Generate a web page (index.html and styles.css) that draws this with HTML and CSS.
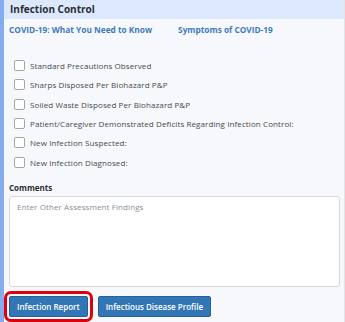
FILE: index.html
```html
<!DOCTYPE html>
<html>
<head>
<meta charset="utf-8">
<link rel="stylesheet" href="styles.css">
</head>
<body>
<div class="panel">
  <div class="panel-header">Infection Control</div>
  <div class="panel-body">
    <div class="links">
      <a class="link" href="#">COVID-19: What You Need to Know</a>
      <a class="link" href="#">Symptoms of COVID-19</a>
    </div>
    <div class="checks">
      <label class="check"><span class="box"></span>Standard Precautions Observed</label>
      <label class="check"><span class="box"></span>Sharps Disposed Per Biohazard P&amp;P</label>
      <label class="check"><span class="box"></span>Soiled Waste Disposed Per Biohazard P&amp;P</label>
      <label class="check"><span class="box"></span>Patient/Caregiver Demonstrated Deficits Regarding Infection Control:</label>
      <label class="check"><span class="box"></span>New Infection Suspected:</label>
      <label class="check"><span class="box"></span>New Infection Diagnosed:</label>
    </div>
    <div class="comments-label">Comments</div>
    <div class="textarea">Enter Other Assessment Findings</div>
    <div class="buttons">
      <button class="btn btn-highlight">Infection Report</button>
      <button class="btn">Infectious Disease Profile</button>
    </div>
  </div>
</div>
</body>
</html>
```
FILE: styles.css
```css
html, body {
  margin: 0;
  padding: 0;
  background: #f7f8fb;
  font-family: "Open Sans", "Noto Sans", sans-serif;
}
.panel {
  width: 345px;
  height: 322px;
  box-sizing: border-box;
  border-left: 4px solid #86acf0;
  border-right: 1px solid #e2e4e8;
  background: #f7f8fb;
  overflow: hidden;
}
.panel-header {
  height: 19px;
  background: #dce8fb;
  padding-left: 6px;
  font-size: 10px;
  font-weight: 700;
  color: #2b2f36;
  line-height: 18px;
}
.panel-body {
  padding: 0 0 0 5px;
  display: flex;
  flex-direction: column;
}
.links {
  display: flex;
  gap: 26px;
  padding-top: 5px;
  height: 12px;
  line-height: 12px;
}
.link {
  font-size: 8.3px;
  font-weight: 700;
  color: #3d7bbf;
  text-decoration: none;
}
.checks {
  display: flex;
  flex-direction: column;
  margin-top: 20px;
}
.check {
  display: flex;
  align-items: center;
  height: 19.3px;
  font-size: 8px;
  letter-spacing: 0.1px;
  color: #464a50;
  padding-left: 5px;
}
.box {
  width: 9px;
  height: 9px;
  border: 1px solid #a3a7ad;
  border-radius: 2px;
  background: #fff;
  margin-right: 5px;
  flex: none;
}
.comments-label {
  margin-top: 10px;
  font-size: 8px;
  font-weight: 700;
  color: #2b2f36;
  height: 12px;
  line-height: 12px;
}
.textarea {
  margin-top: 2px;
  width: 331px;
  height: 91px;
  box-sizing: border-box;
  border: 1px solid #d5d8dd;
  border-radius: 3px;
  background: #fff;
  padding: 4px 7px;
  font-size: 8px;
  letter-spacing: 0.1px;
  color: #8a8e94;
  line-height: 12px;
}
.buttons {
  display: flex;
  gap: 10px;
  margin-top: 9px;
}
.btn {
  height: 21px;
  box-sizing: border-box;
  background: #3276b6;
  border: 1px solid #24609a;
  border-radius: 2px;
  color: #fff;
  font-family: "Open Sans", "Noto Sans", sans-serif;
  font-size: 8px;
  font-weight: 600;
  padding: 0 7px;
  white-space: nowrap;
}
.btn-highlight {
  outline: 3px solid #e0000b;
  outline-offset: 2px;
}
```
